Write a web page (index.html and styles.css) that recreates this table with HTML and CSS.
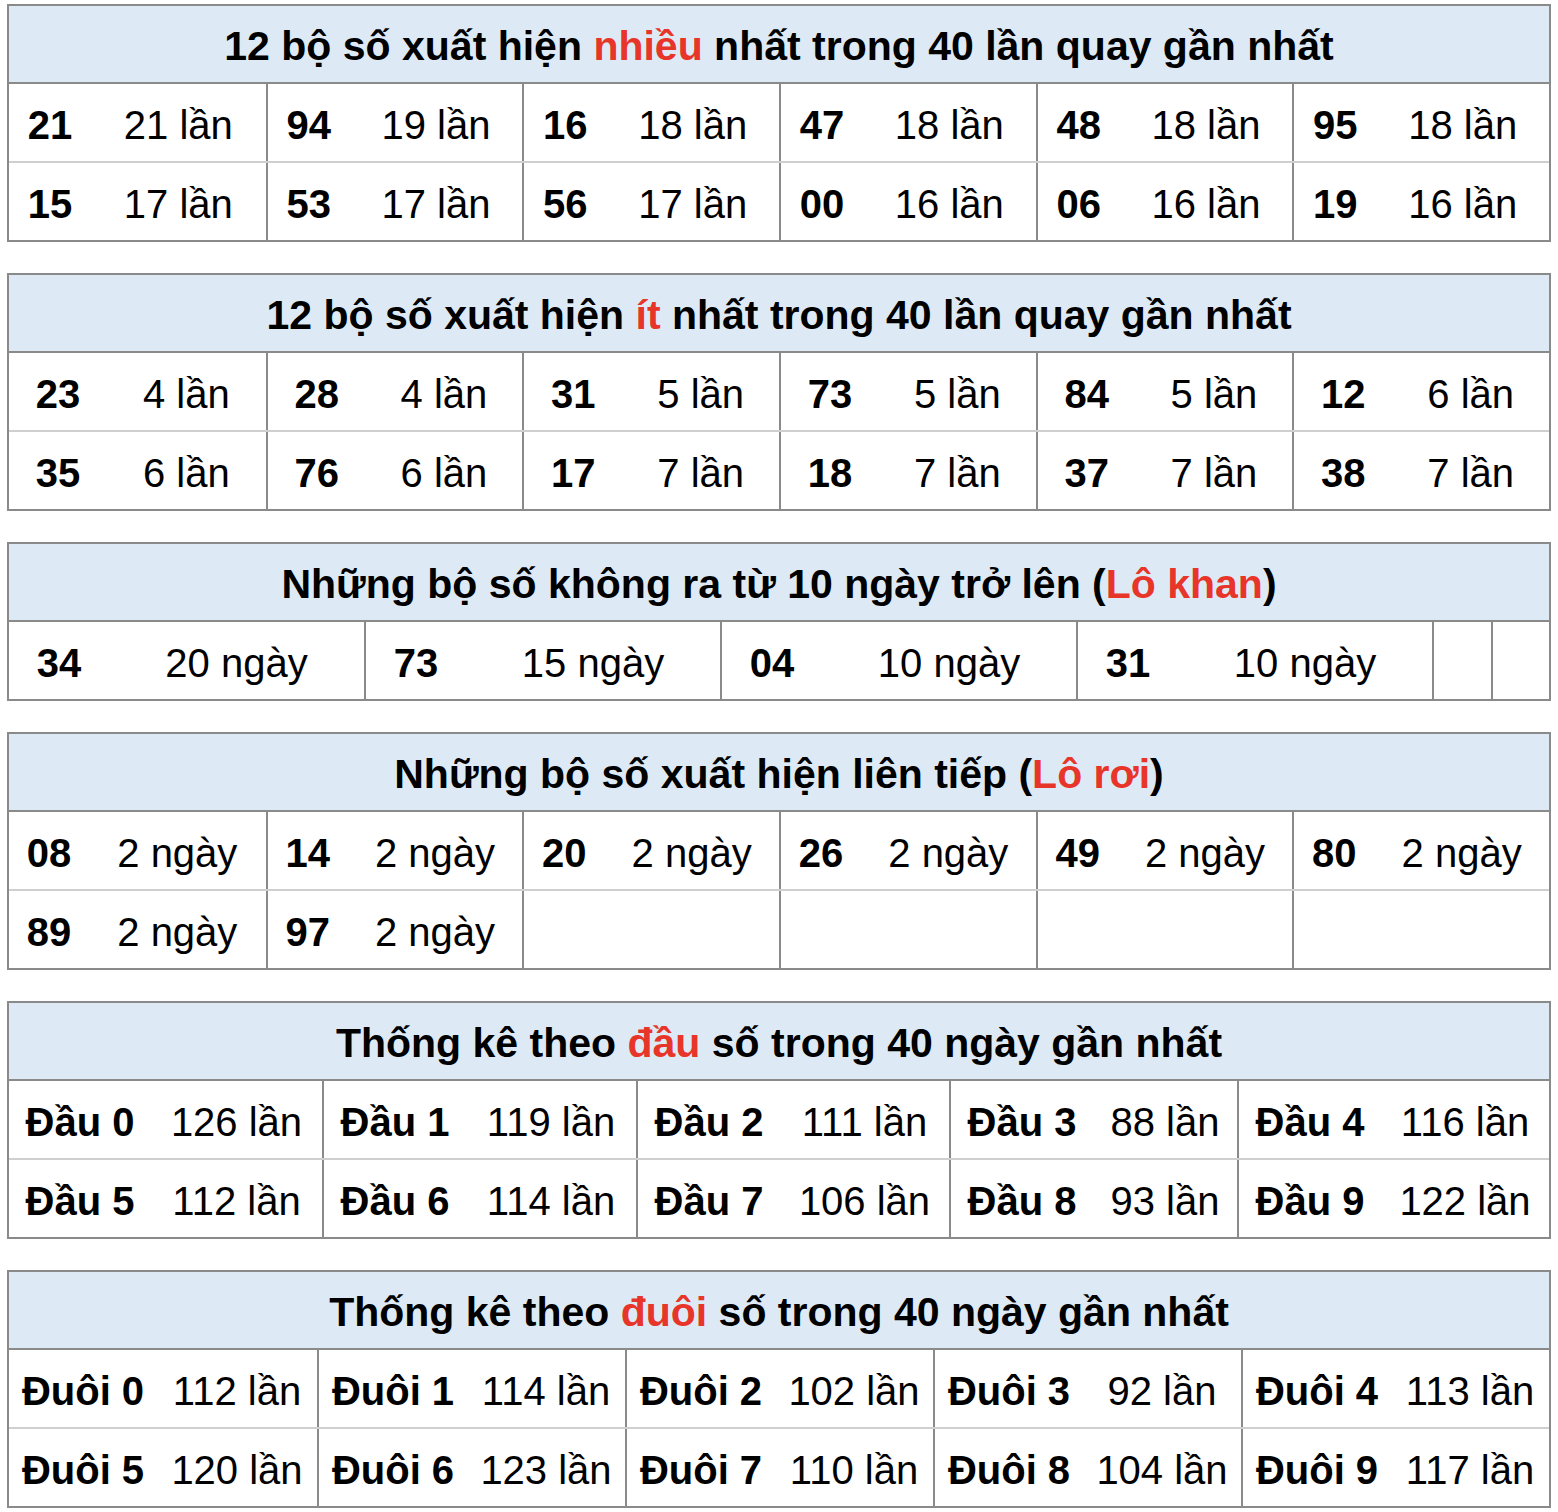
FILE: index.html
```html
<!DOCTYPE html>
<html lang="vi">
<head>
<meta charset="utf-8">
<title>Thống kê lô tô</title>
<link rel="stylesheet" href="styles.css">
</head>
<body>
<div class="page">

  <section class="tbl t1">
    <div class="hdr">12 bộ số xuất hiện&nbsp;<span class="hl">nhiều</span>&nbsp;nhất trong 40 lần quay gần nhất</div>
    <div class="row cols6">
      <div class="cell"><b>21</b><span>21 lần</span></div>
      <div class="cell"><b>94</b><span>19 lần</span></div>
      <div class="cell"><b>16</b><span>18 lần</span></div>
      <div class="cell"><b>47</b><span>18 lần</span></div>
      <div class="cell"><b>48</b><span>18 lần</span></div>
      <div class="cell"><b>95</b><span>18 lần</span></div>
    </div>
    <div class="row cols6">
      <div class="cell"><b>15</b><span>17 lần</span></div>
      <div class="cell"><b>53</b><span>17 lần</span></div>
      <div class="cell"><b>56</b><span>17 lần</span></div>
      <div class="cell"><b>00</b><span>16 lần</span></div>
      <div class="cell"><b>06</b><span>16 lần</span></div>
      <div class="cell"><b>19</b><span>16 lần</span></div>
    </div>
  </section>

  <section class="tbl t2">
    <div class="hdr">12 bộ số xuất hiện&nbsp;<span class="hl">ít</span>&nbsp;nhất trong 40 lần quay gần nhất</div>
    <div class="row cols6">
      <div class="cell"><b>23</b><span>4 lần</span></div>
      <div class="cell"><b>28</b><span>4 lần</span></div>
      <div class="cell"><b>31</b><span>5 lần</span></div>
      <div class="cell"><b>73</b><span>5 lần</span></div>
      <div class="cell"><b>84</b><span>5 lần</span></div>
      <div class="cell"><b>12</b><span>6 lần</span></div>
    </div>
    <div class="row cols6">
      <div class="cell"><b>35</b><span>6 lần</span></div>
      <div class="cell"><b>76</b><span>6 lần</span></div>
      <div class="cell"><b>17</b><span>7 lần</span></div>
      <div class="cell"><b>18</b><span>7 lần</span></div>
      <div class="cell"><b>37</b><span>7 lần</span></div>
      <div class="cell"><b>38</b><span>7 lần</span></div>
    </div>
  </section>

  <section class="tbl t3">
    <div class="hdr">Những bộ số không ra từ 10 ngày trở lên (<span class="hl">Lô khan</span>)</div>
    <div class="row cols-khan">
      <div class="cell"><b>34</b><span>20 ngày</span></div>
      <div class="cell"><b>73</b><span>15 ngày</span></div>
      <div class="cell"><b>04</b><span>10 ngày</span></div>
      <div class="cell"><b>31</b><span>10 ngày</span></div>
      <div class="cell"></div>
      <div class="cell"></div>
    </div>
  </section>

  <section class="tbl t4">
    <div class="hdr">Những bộ số xuất hiện liên tiếp (<span class="hl">Lô rơi</span>)</div>
    <div class="row cols6">
      <div class="cell"><b>08</b><span>2 ngày</span></div>
      <div class="cell"><b>14</b><span>2 ngày</span></div>
      <div class="cell"><b>20</b><span>2 ngày</span></div>
      <div class="cell"><b>26</b><span>2 ngày</span></div>
      <div class="cell"><b>49</b><span>2 ngày</span></div>
      <div class="cell"><b>80</b><span>2 ngày</span></div>
    </div>
    <div class="row cols6">
      <div class="cell"><b>89</b><span>2 ngày</span></div>
      <div class="cell"><b>97</b><span>2 ngày</span></div>
      <div class="cell"></div>
      <div class="cell"></div>
      <div class="cell"></div>
      <div class="cell"></div>
    </div>
  </section>

  <section class="tbl t5">
    <div class="hdr">Thống kê theo&nbsp;<span class="hl">đầu</span>&nbsp;số trong 40 ngày gần nhất</div>
    <div class="row cols-dau">
      <div class="cell"><b>Đầu 0</b><span>126 lần</span></div>
      <div class="cell"><b>Đầu 1</b><span>119 lần</span></div>
      <div class="cell"><b>Đầu 2</b><span>111 lần</span></div>
      <div class="cell"><b>Đầu 3</b><span>88 lần</span></div>
      <div class="cell"><b>Đầu 4</b><span>116 lần</span></div>
    </div>
    <div class="row cols-dau">
      <div class="cell"><b>Đầu 5</b><span>112 lần</span></div>
      <div class="cell"><b>Đầu 6</b><span>114 lần</span></div>
      <div class="cell"><b>Đầu 7</b><span>106 lần</span></div>
      <div class="cell"><b>Đầu 8</b><span>93 lần</span></div>
      <div class="cell"><b>Đầu 9</b><span>122 lần</span></div>
    </div>
  </section>

  <section class="tbl t6">
    <div class="hdr">Thống kê theo&nbsp;<span class="hl">đuôi</span>&nbsp;số trong 40 ngày gần nhất</div>
    <div class="row cols5">
      <div class="cell"><b>Đuôi 0</b><span>112 lần</span></div>
      <div class="cell"><b>Đuôi 1</b><span>114 lần</span></div>
      <div class="cell"><b>Đuôi 2</b><span>102 lần</span></div>
      <div class="cell"><b>Đuôi 3</b><span>92 lần</span></div>
      <div class="cell"><b>Đuôi 4</b><span>113 lần</span></div>
    </div>
    <div class="row cols5">
      <div class="cell"><b>Đuôi 5</b><span>120 lần</span></div>
      <div class="cell"><b>Đuôi 6</b><span>123 lần</span></div>
      <div class="cell"><b>Đuôi 7</b><span>110 lần</span></div>
      <div class="cell"><b>Đuôi 8</b><span>104 lần</span></div>
      <div class="cell"><b>Đuôi 9</b><span>117 lần</span></div>
    </div>
  </section>

</div>
</body>
</html>
```
FILE: styles.css
```css
* {
  box-sizing: border-box;
}

body {
  margin: 0;
  background: #ffffff;
  color: #000000;
  font-family: "Liberation Sans", Arial, Helvetica, sans-serif;
  font-size: 40px;
}

.page {
  width: 1558px;
  padding: 4px 7px 0 7px;
  display: flex;
  flex-direction: column;
  gap: 31px;
}

.tbl {
  width: 1544px;
  border: 2px solid #8a8a8a;
}

.hdr {
  height: 78px;
  padding-top: 4px;
  background: #ddeaf6;
  border-bottom: 2px solid #8a8a8a;
  display: flex;
  align-items: center;
  justify-content: center;
  font-size: 41px;
  font-weight: bold;
  white-space: nowrap;
}

.hl {
  color: #e8352a;
}

.row {
  display: grid;
  height: 77px;
}

.row + .row {
  height: 79px;
  border-top: 2px solid #cfcfcf;
}

.cols6 {
  grid-template-columns: repeat(6, 1fr);
}

.cols5 {
  grid-template-columns: repeat(5, 1fr);
}

.cols-khan {
  grid-template-columns: 355px 356px 356px 356px 59px 58px;
}

.cols-dau {
  grid-template-columns: 313px 314px 313px 288px 312px;
}

.cell {
  display: grid;
  align-items: center;
  text-align: center;
  white-space: nowrap;
  padding-top: 6px;
  border-left: 2px solid #8a8a8a;
}

.cell:first-child {
  border-left: none;
}

.cell b {
  font-weight: bold;
}

.t1 .cell { grid-template-columns: 82px 1fr; }
.t2 .cell { grid-template-columns: 98px 1fr; }
.t3 .cell { grid-template-columns: 100px 1fr; }
.t4 .cell { grid-template-columns: 80px 1fr; }
.t5 .cell { grid-template-columns: 142px 1fr; }
.t6 .cell { grid-template-columns: 148px 1fr; }
```
